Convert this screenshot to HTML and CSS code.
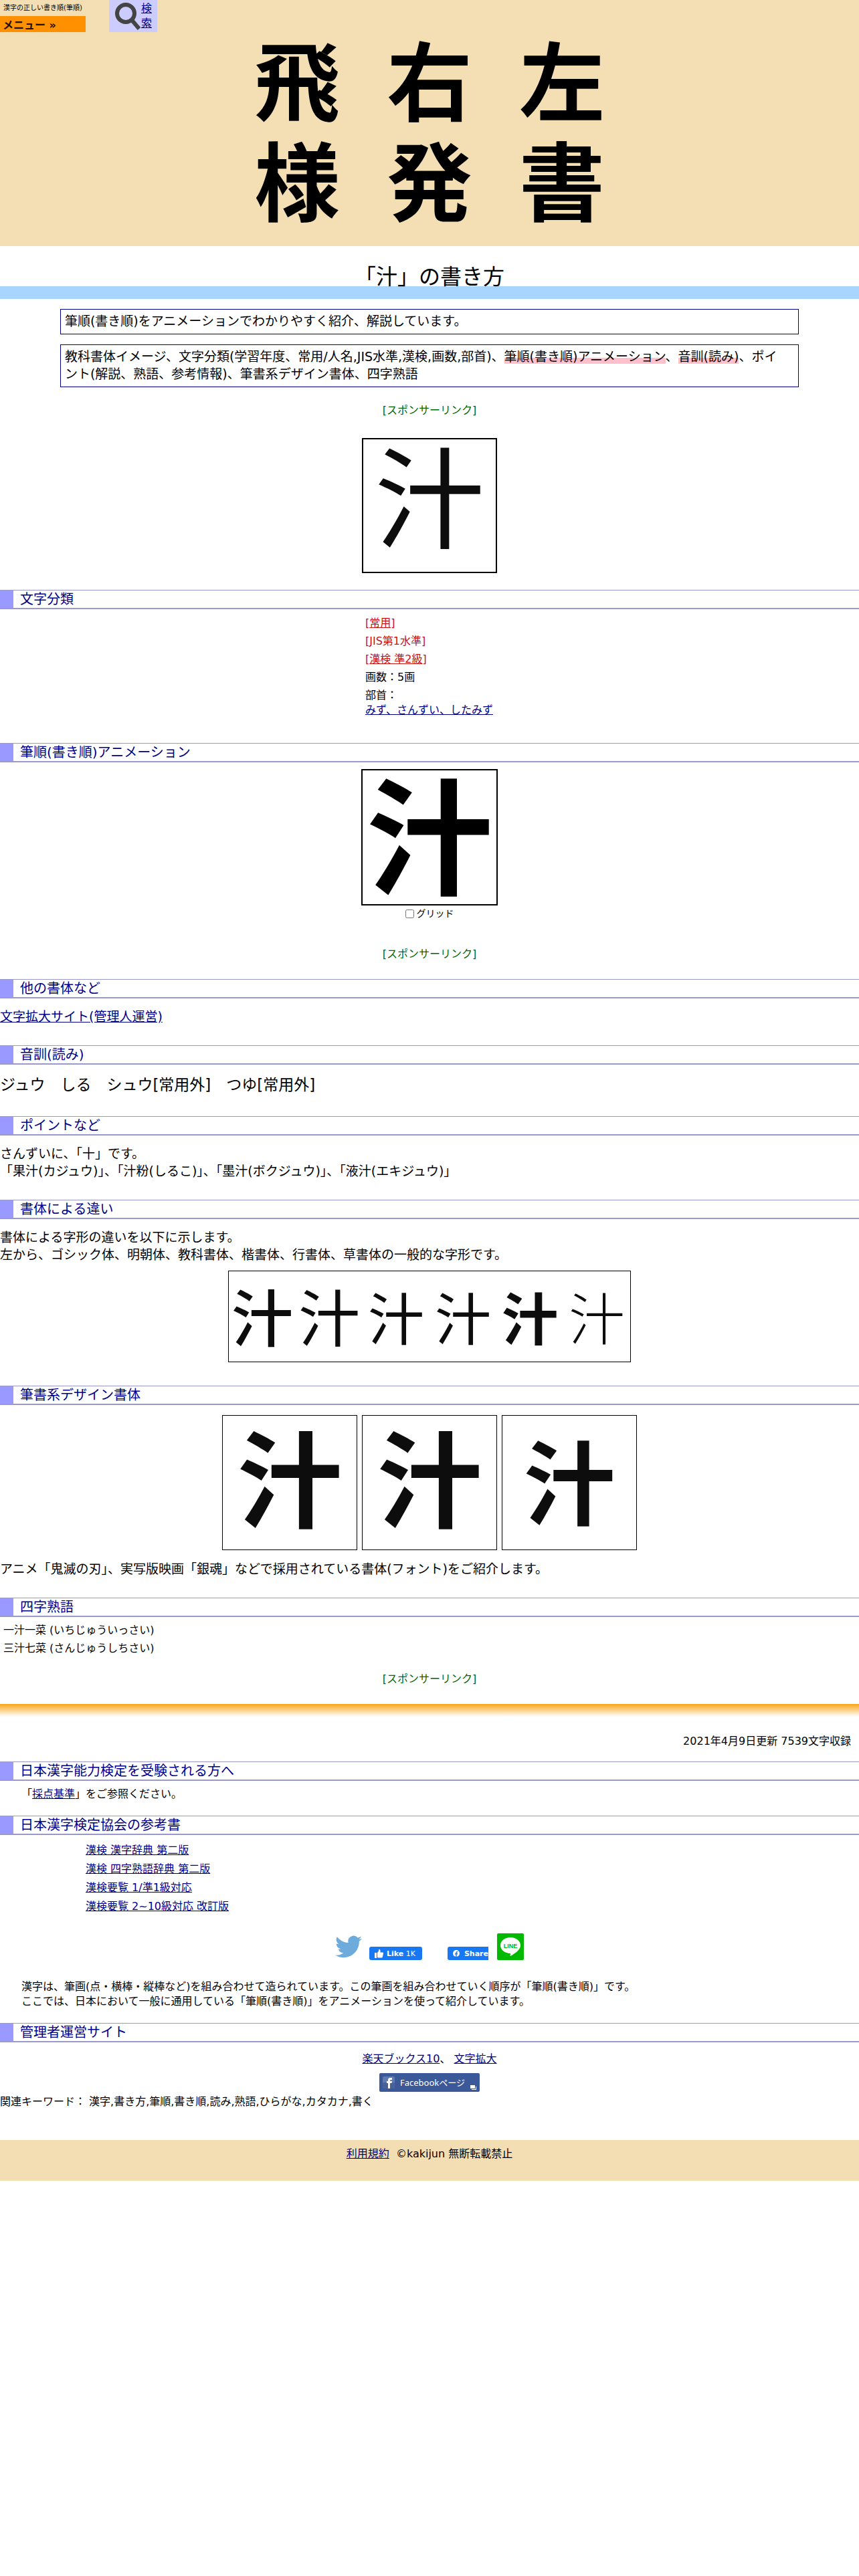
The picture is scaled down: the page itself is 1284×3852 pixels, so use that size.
FILE: index.html
```html
<!DOCTYPE html>
<html lang="ja">
<head>
    <meta charset="UTF-8">
    <meta name="viewport" content="width=device-width, initial-scale=1.0">
    <title>「汁」の書き方</title>
    <link rel="stylesheet" href="styles.css">
</head>
<body>
    <header class="site-header">
        <div class="top-bar">
            <div class="brand">
                <div class="site-name">漢字の正しい書き順(筆順)</div>
                <button type="button" class="menu-btn">メニュー »</button>
            </div>
            <a href="#" class="search-link">
                <svg width="40" height="44" viewBox="0 0 40 44" aria-hidden="true">
                    <circle cx="17" cy="18" r="13" fill="none" stroke="#444" stroke-width="6"/>
                    <path d="M26 28 37 41" stroke="#444" stroke-width="6"/>
                </svg>
                <span>検<br>索</span>
            </a>
        </div>
        <div class="hero">
            <span>飛</span><span>右</span><span>左</span>
            <span>様</span><span>発</span><span>書</span>
        </div>
    </header>

    <main>
        <h1>「汁」の書き方</h1>
        <p class="intro">筆順(書き順)をアニメーションでわかりやすく紹介、解説しています。</p>
        <p class="intro">教科書体イメージ、文字分類(学習年度、常用/人名,JIS水準,漢検,画数,部首)、<span class="marker">筆順(書き順)アニメーション</span>、<span class="marker">音訓(読み)</span>、ポイント(解説、熟語、参考情報)、筆書系デザイン書体、四字熟語</p>
        <p class="sponsor">[スポンサーリンク]</p>
        <div class="kanji-box textbook">汁</div>

        <h2>文字分類</h2>
        <ul class="category">
            <li class="red">[<a href="#">常用</a>]</li>
            <li class="red">[JIS第1水準]</li>
            <li class="red">[<a href="#">漢検 準2級</a>]</li>
            <li>画数：5画</li>
            <li>部首：<br><a href="#">みず、さんずい、したみず</a></li>
        </ul>

        <h2>筆順(書き順)アニメーション</h2>
        <div class="kanji-box animation">汁</div>
        <div class="grid-switch">
            <input type="checkbox" id="grid">
            <label for="grid">グリッド</label>
        </div>
        <p class="sponsor">[スポンサーリンク]</p>

        <h2>他の書体など</h2>
        <p class="text"><a href="#">文字拡大サイト(管理人運営)</a></p>

        <h2>音訓(読み)</h2>
        <p class="text reading">ジュウ　しる　シュウ[常用外]　つゆ[常用外]</p>

        <h2>ポイントなど</h2>
        <p class="text">さんずいに、「十」です。<br>「果汁(カジュウ)」、「汁粉(しるこ)」、「墨汁(ボクジュウ)」、「液汁(エキジュウ)」</p>

        <h2>書体による違い</h2>
        <p class="text before-figure">書体による字形の違いを以下に示します。<br>左から、ゴシック体、明朝体、教科書体、楷書体、行書体、草書体の一般的な字形です。</p>
        <div class="styles-figure">
            <span class="gothic">汁</span><span class="mincho">汁</span><span>汁</span><span>汁</span><span class="gyosho">汁</span><span class="sosho">汁</span>
        </div>

        <h2>筆書系デザイン書体</h2>
        <div class="brush-list">
            <div class="brush">汁</div>
            <div class="brush">汁</div>
            <div class="brush small">汁</div>
        </div>
        <p class="text">アニメ「鬼滅の刃」、実写版映画「銀魂」などで採用されている書体(フォント)をご紹介します。</p>

        <h2>四字熟語</h2>
        <ul class="idioms">
            <li>一汁一菜 (いちじゅういっさい)</li>
            <li>三汁七菜 (さんじゅうしちさい)</li>
        </ul>
        <p class="sponsor">[スポンサーリンク]</p>
    </main>

    <section class="info">
        <p class="updated">2021年4月9日更新 7539文字収録</p>
        <h2>日本漢字能力検定を受験される方へ</h2>
        <p class="note">「<a href="#">採点基準</a>」をご参照ください。</p>

        <h2>日本漢字検定協会の参考書</h2>
        <ul class="books">
            <li><a href="#">漢検 漢字辞典 第二版</a></li>
            <li><a href="#">漢検 四字熟語辞典 第二版</a></li>
            <li><a href="#">漢検要覧 1/準1級対応</a></li>
            <li><a href="#">漢検要覧 2~10級対応 改訂版</a></li>
        </ul>

        <div class="social">
            <a href="#" class="twitter" aria-label="Twitter">
                <svg width="40" height="40" viewBox="0 0 24 24" aria-hidden="true">
                    <path fill="#6cabdc" d="M24 4.6a10 10 0 0 1-2.8.8 5 5 0 0 0 2.1-2.7c-.9.5-2 1-3.1 1.2a4.9 4.9 0 0 0-8.4 4.5C7.700 8.200 4.100 6.200 1.700 3.200a4.800 4.800 0 0 0 1.500 6.500c-.8 0-1.600-.2-2.200-.6v.1a4.900 4.900 0 0 0 3.900 4.800 5 5 0 0 1-2.200.1 4.900 4.900 0 0 0 4.600 3.400A9.900 9.900 0 0 1 0 19.500a14 14 0 0 0 7.500 2.200c9.100 0 14-7.500 14-14v-.6A10 10 0 0 0 24 4.600z"/>
                </svg>
            </a>
            <button type="button" class="fb-btn">
                <svg width="13" height="13" viewBox="0 0 13 13" aria-hidden="true">
                    <path fill="#fff" d="M0 5h3v8H0zM4 5l2-2.500V.5C6 0 8.500-.5 8.500 2v2.500H12q1.500 0 1 1.500l-1.200 5.500q-.3 1-1.300 1H5.500L4 12z"/>
                </svg>
                <span><b>Like</b> 1K</span>
            </button>
            <button type="button" class="fb-btn share">
                <svg width="12" height="12" viewBox="0 0 12 12" aria-hidden="true">
                    <circle cx="6" cy="6" r="6" fill="#fff"/>
                    <path d="M5.200 12V7.800H3.700V6h1.500V4.700Q5.200 2.500 7.300 2.500h1.300v1.600h-.8q-.9 0-.9.900v1h1.700l-.3 1.800H6.900V12z" fill="#1877f2"/>
                </svg>
                <b>Share</b>
            </button>
            <a href="#" class="line" aria-label="LINE">
                <svg width="40" height="40" viewBox="0 0 40 40" aria-hidden="true">
                    <rect width="40" height="40" rx="2" fill="#00b900"/>
                    <path fill="#fff" d="M20 6c8.300 0 15 5.300 15 12 0 5.500-5.500 10.500-14.500 15.800-.8.400-1 0-.9-.6l.5-3.200C11.700 30 5 24.700 5 18S11.700 6 20 6z"/>
                    <text x="20" y="22" text-anchor="middle" class="line-name">LINE</text>
                </svg>
            </a>
        </div>

        <p class="about">漢字は、筆画(点・横棒・縦棒など)を組み合わせて造られています。この筆画を組み合わせていく順序が「筆順(書き順)」です。<br>ここでは、日本において一般に通用している「筆順(書き順)」をアニメーションを使って紹介しています。</p>

        <h2>管理者運営サイト</h2>
        <p class="sites"><a href="#">楽天ブックス10</a>、 <a href="#">文字拡大</a></p>
        <a href="#" class="fb-page">
            <svg width="18" height="18" viewBox="0 0 18 18" aria-hidden="true">
                <rect width="18" height="18" rx="2" fill="#5f7bb0"/>
                <rect y="9" width="18" height="9" rx="2" fill="#466299"/>
                <path fill="#fff" d="M8 18v-8H6V7h2V5.500Q8 2 11.500 2H14v3h-1.500Q11 5 11 6v1h3l-.5 3H11v8z"/>
            </svg>
            <span>Facebookページ</span>
            <svg class="popup-mark" width="9" height="7" viewBox="0 0 9 7" aria-hidden="true">
                <path fill="#fff" d="M0 0h7v5H0zM8 2h1v5H2V6h6z"/>
            </svg>
        </a>
        <p class="keywords">関連キーワード： 漢字,書き方,筆順,書き順,読み,熟語,ひらがな,カタカナ,書く</p>
    </section>

    <footer>
        <a href="#">利用規約</a>&nbsp; ©kakijun 無断転載禁止
    </footer>
</body>
</html>
```
FILE: styles.css
```css
body {
    font-family: "DejaVu Sans", "Noto Sans CJK JP", sans-serif;
    font-size: 16px;
    line-height: 22px;
    margin: 0;
    color: #000;
    background-color: #fff;
}
a {
    color: #00008b;
}
p, ul {
    margin: 0;
    padding: 0;
}
ul {
    list-style: none;
}
button {
    font-family: inherit;
    border: none;
    padding: 0;
    cursor: pointer;
}

/* header */
.site-header {
    background-color: #f4deb3;
}
.top-bar {
    display: flex;
    gap: 35px;
    height: 48px;
}
.brand {
    width: 128px;
}
.site-name {
    font-size: 10px;
    line-height: 24px;
    text-align: center;
    white-space: nowrap;
}
.menu-btn {
    display: block;
    width: 100%;
    height: 24px;
    padding-left: 4px;
    font-size: 16px;
    font-weight: bold;
    text-align: left;
    background-color: #ff9000;
    color: #221100;
}
.search-link {
    display: flex;
    align-items: center;
    width: 64px;
    padding-left: 8px;
    background-color: #ccccff;
}
.hero {
    display: grid;
    grid-template-columns: repeat(3, 198px);
    justify-content: center;
    padding: 4px 0 16px;
    font-size: 128px;
    font-weight: bold;
    line-height: 150px;
    text-align: center;
}

/* headings */
h1 {
    margin: 0 0 15px;
    padding: 24px 0 11px;
    font-size: 32px;
    font-weight: normal;
    line-height: 44px;
    text-align: center;
    background: linear-gradient(transparent 60px, #a8d5fd 60px);
}
h2 {
    margin: 0;
    padding-left: 10px;
    font-size: 20px;
    font-weight: normal;
    line-height: 26px;
    color: #00008b;
    border-top: 1px solid #9999cc;
    border-bottom: 2px solid #9999cc;
    box-shadow: inset 20px 0 #9999ff;
    text-indent: 20px;
}

.intro {
    margin: 0 7% 15px;
    padding: 4px 20px 6px 6px;
    font-size: 19px;
    line-height: 26px;
    border: 1px solid #00008b;
}
.marker {
    background: linear-gradient(transparent 60%, #ffc0cb 60%);
}
.sponsor {
    padding: 24px 0 26px;
    text-align: center;
    color: #006600;
}
.intro + .sponsor {
    padding: 9px 0 30px;
}

/* character pictures */
.kanji-box, .styles-figure, .brush {
    text-align: center;
    color: #0d0d0d;
}
.kanji-box {
    width: 200px;
    margin: 0 auto;
    border: 2px solid #000;
}
.textbook {
    width: 198px;
    height: 198px;
    margin-bottom: 25px;
    font-size: 164px;
    line-height: 188px;
}
.animation {
    height: 200px;
    margin-top: 10px;
    font-size: 188px;
    font-weight: bold;
    line-height: 212px;
    color: #000;
}
.category {
    width: 192px;
    margin: 10px auto 38px;
}
.category li + li {
    margin-top: 5px;
}
.red, .red a {
    color: #cc1111;
}
.grid-switch {
    display: flex;
    justify-content: center;
    align-items: center;
    height: 24px;
    margin-bottom: 14px;
    font-size: 14px;
}
.grid-switch input {
    margin: 0 4px 0 0;
}

/* article text */
.text {
    margin: 14px 0 30px;
    font-size: 19px;
    line-height: 26px;
}
.reading {
    font-size: 23px;
    line-height: 33px;
}
.before-figure {
    margin-bottom: 11px;
}
.styles-figure {
    display: grid;
    grid-template-columns: repeat(6, 1fr);
    width: 600px;
    height: 135px;
    margin: 0 auto 35px;
    border: 1px solid #000;
    font-size: 84px;
    line-height: 148px;
}
.gothic {
    font-size: 92px;
    font-weight: 500;
}
.mincho {
    font-size: 92px;
}
.gyosho {
    font-weight: bold;
}
.sosho {
    font-weight: 300;
}
.brush-list {
    display: flex;
    justify-content: center;
    gap: 7px;
    margin-top: 15px;
}
.brush {
    width: 200px;
    height: 200px;
    border: 1px solid #000;
    font-size: 156px;
    font-weight: bold;
    line-height: 202px;
}
.brush.small {
    font-size: 136px;
    line-height: 212px;
}
.brush-list + .text {
    margin-top: 15px;
}
.idioms {
    padding: 9px 5px 0;
}
.idioms li + li {
    margin-top: 5px;
}

/* lower part */
.info {
    padding-top: 45px;
    background: linear-gradient(#f9a61a, #fff) no-repeat;
    background-size: 100% 19px;
}
.updated {
    margin: 0 12px 19px;
    text-align: right;
}
.note {
    margin: 9px 32px 21px;
}
.books {
    margin: 9px 128px 26px;
    line-height: 28px;
}
.social {
    display: flex;
    justify-content: center;
    align-items: flex-end;
    margin-bottom: 29px;
}
.social svg {
    display: block;
}
.twitter {
    margin-right: 11px;
}
.fb-btn {
    display: flex;
    align-items: center;
    gap: 5px;
    width: 79px;
    height: 20px;
    padding-left: 8px;
    font-size: 11px;
    white-space: nowrap;
    color: #fff;
    background-color: #1877f2;
    border-radius: 3px;
}
.share {
    width: 61px;
    margin: 0 13px 0 38px;
    gap: 7px;
    border-radius: 3px 0 0 3px;
    overflow: hidden;
}
.line-name {
    font-family: "Liberation Sans", sans-serif;
    font-size: 9px;
    font-weight: bold;
    fill: #00b900;
}
.about {
    margin: 0 32px 21px;
}
.sites {
    margin: 14px 0 10px;
    text-align: center;
}
.fb-page {
    display: flex;
    align-items: center;
    width: 145px;
    height: 28px;
    margin: 0 auto;
    padding-left: 5px;
    gap: 8px;
    border-radius: 2px;
    background-color: #3b5998;
    color: #fff;
    font-family: "Noto Sans", "Noto Sans CJK JP", sans-serif;
    font-size: 13px;
    text-decoration: none;
    white-space: nowrap;
}
.popup-mark {
    align-self: flex-end;
    margin-bottom: 3px;
}
.keywords {
    margin: 4px 0 46px;
}
footer {
    padding: 10px 0 29px;
    text-align: center;
    background-color: #f3ddb3;
}
```
